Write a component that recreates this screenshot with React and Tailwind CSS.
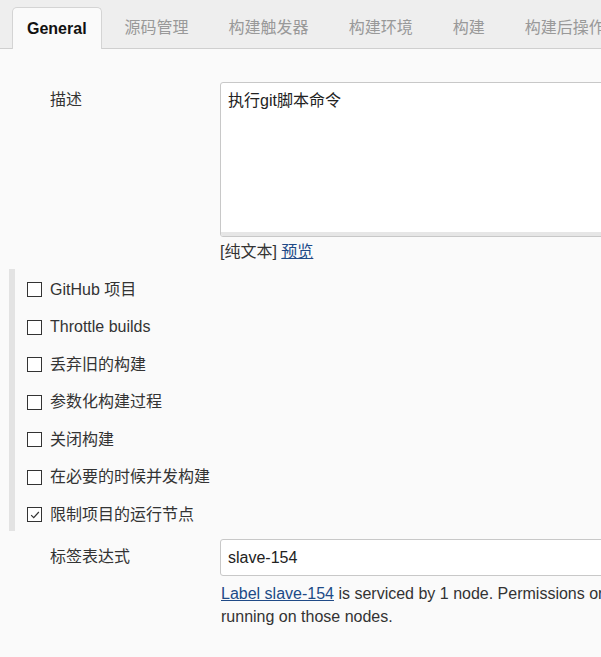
export default function App() {
  const tabs = ["源码管理", "构建触发器", "构建环境", "构建", "构建后操作"]
  const options = [
    { label: "GitHub 项目", checked: false },
    { label: "Throttle builds", checked: false },
    { label: "丢弃旧的构建", checked: false },
    { label: "参数化构建过程", checked: false },
    { label: "关闭构建", checked: false },
    { label: "在必要的时候并发构建", checked: false },
    { label: "限制项目的运行节点", checked: true },
  ]

  return (
    <div
      className="min-h-screen w-full overflow-hidden bg-[#fafafa] text-[16px] text-[#333]"
      style={{ fontFamily: '"Liberation Sans", Arial, "Noto Sans CJK SC", sans-serif' }}
    >
      {/* tab bar */}
      <div className="flex h-[49px] items-end whitespace-nowrap border-b border-[#cfcfcf] bg-[#eeeeee] pl-[12px]">
        <div className="-mb-px mr-[3px] flex h-[42px] items-center rounded-t-[5px] border border-b-0 border-[#d4d4d4] bg-[#fafafa] px-[14px] font-bold text-[#111]">
          General
        </div>
        {tabs.map((t) => (
          <div key={t} className="flex h-[41px] items-center px-[20px] text-[#999]">
            {t}
          </div>
        ))}
      </div>

      {/* description */}
      <div className="mt-[33px] flex">
        <div className="w-[220px] shrink-0 pl-[50px] pt-[8px] leading-[20px]">描述</div>
        <div className="w-[800px] shrink-0">
          <div className="h-[155px] overflow-hidden rounded-[3px] border border-[#c8c8c8] bg-white">
            <div className="h-[149px] px-[7px] pt-[8px] leading-[20px] text-[#222]">执行git脚本命令</div>
            <div className="h-[5px] bg-[#e6e6e6]" />
          </div>
          <div className="mt-[5px] leading-[20px]">
            [纯文本] <a className="text-[#204a87] underline">预览</a>
          </div>
        </div>
      </div>

      {/* options */}
      <div className="ml-[9px] mt-[7px] h-[262px] border-l-[6px] border-[#e3e3e3] pl-[12px] pt-[2px]">
        {options.map((o) => (
          <div key={o.label} className="flex h-[37.5px] items-center gap-[8px]">
            <div className="flex h-[15px] w-[15px] items-center justify-center border border-[#333] bg-white">
              {o.checked && (
                <svg viewBox="0 0 14 14" className="h-[12px] w-[12px]">
                  <path d="M2.5 7.2 L5.5 10 L11.5 3.5" fill="none" stroke="#333" strokeWidth="1.4" />
                </svg>
              )}
            </div>
            <span>{o.label}</span>
          </div>
        ))}
      </div>

      {/* label expression */}
      <div className="mt-[8px] flex">
        <div className="w-[220px] shrink-0 pl-[50px] pt-[8px] leading-[20px]">标签表达式</div>
        <div className="w-[800px] shrink-0">
          <div className="flex h-[37px] items-center rounded-[3px] border border-[#c8c8c8] bg-white px-[7px] text-[#222]">
            slave-154
          </div>
          <div className="mt-[6px] whitespace-nowrap pl-px leading-[23px] text-[#333]">
            <a className="text-[#204a87] underline">Label slave-154</a> is serviced by 1 node. Permissions or other restrictions provided by plugins may prevent this job from
            <br />
            running on those nodes.
          </div>
        </div>
      </div>
    </div>
  )
}
